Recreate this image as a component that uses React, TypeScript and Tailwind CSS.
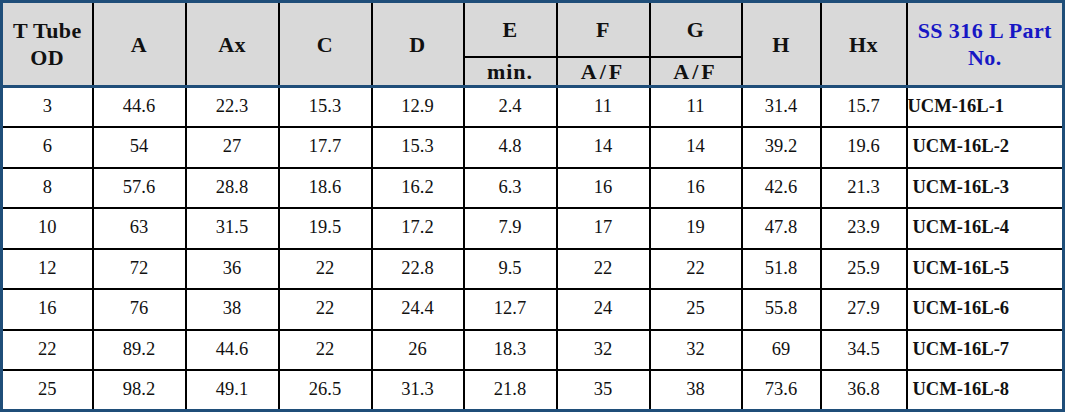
const rows = [
  ["3", "44.6", "22.3", "15.3", "12.9", "2.4", "11", "11", "31.4", "15.7", "UCM-16L-1"],
  ["6", "54", "27", "17.7", "15.3", "4.8", "14", "14", "39.2", "19.6", "UCM-16L-2"],
  ["8", "57.6", "28.8", "18.6", "16.2", "6.3", "16", "16", "42.6", "21.3", "UCM-16L-3"],
  ["10", "63", "31.5", "19.5", "17.2", "7.9", "17", "19", "47.8", "23.9", "UCM-16L-4"],
  ["12", "72", "36", "22", "22.8", "9.5", "22", "22", "51.8", "25.9", "UCM-16L-5"],
  ["16", "76", "38", "22", "24.4", "12.7", "24", "25", "55.8", "27.9", "UCM-16L-6"],
  ["22", "89.2", "44.6", "22", "26", "18.3", "32", "32", "69", "34.5", "UCM-16L-7"],
  ["25", "98.2", "49.1", "26.5", "31.3", "21.8", "35", "38", "73.6", "36.8", "UCM-16L-8"],
];

const widths = [91, 93, 93, 93, 92, 93, 93, 92, 79, 86, 157];

export default function App() {
  const th = "border-2 border-black bg-[#d9d9d9] font-bold text-center align-middle p-0";
  const td = "border-2 border-black text-center align-middle p-0";

  return (
    <div className="w-[1065px] h-[412px] bg-white font-['Liberation_Serif',serif] text-[#111]">
      <table className="w-[1065px] table-fixed border-collapse border-[3px] border-[#1f4e79]">
        <colgroup>
          {widths.map((w, i) => (
            <col key={i} style={{ width: w }} />
          ))}
        </colgroup>
        <thead className="text-[22px] leading-[27px] tracking-[0.4px]">
          <tr className="h-[55.5px]">
            <th rowSpan={2} className={th}>
              T Tube
              <br />
              OD
            </th>
            <th rowSpan={2} className={th}>A</th>
            <th rowSpan={2} className={th}>Ax</th>
            <th rowSpan={2} className={th}>C</th>
            <th rowSpan={2} className={th}>D</th>
            <th className={th}>E</th>
            <th className={th}>F</th>
            <th className={th}>G</th>
            <th rowSpan={2} className={th}>H</th>
            <th rowSpan={2} className={th}>Hx</th>
            <th rowSpan={2} className={`${th} text-[#1717c4]`}>
              SS 316 L Part
              <br />
              No.
            </th>
          </tr>
          <tr className="h-[29.5px]">
            <th className={`${th} tracking-[1px]`}>min.</th>
            <th className={`${th} tracking-[3px]`}>A/F</th>
            <th className={`${th} tracking-[3px]`}>A/F</th>
          </tr>
        </thead>
        <tbody className="text-[18.5px]">
          {rows.map((r, ri) => (
            <tr key={ri} className="h-[40.5px]">
              {r.map((c, ci) => (
                <td
                  key={ci}
                  className={`${td} ${ri === 0 ? "border-t-[3px] border-t-[#1f4e79]" : ""} ${
                    ci === 10 ? `text-left font-bold ${ri === 0 ? "pl-0" : "pl-[5px]"}` : ""
                  }`}
                >
                  {c}
                </td>
              ))}
            </tr>
          ))}
        </tbody>
      </table>
    </div>
  );
}
